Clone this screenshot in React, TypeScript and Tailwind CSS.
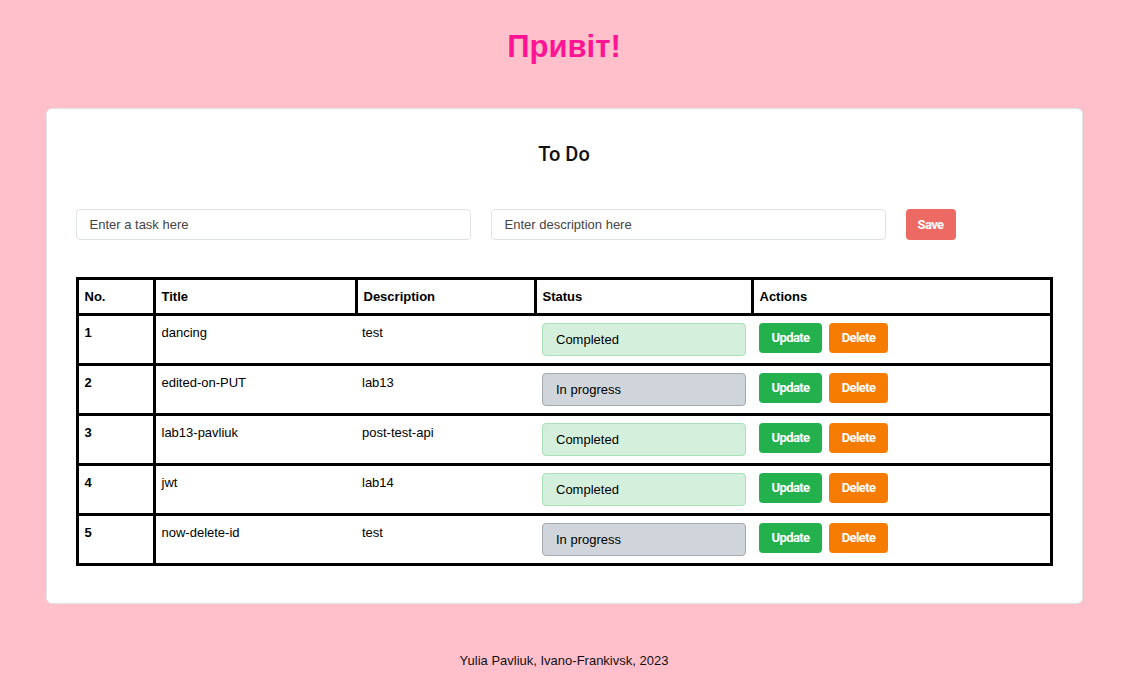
import React, { useState } from 'react';

interface Task {
  id: number;
  title: string;
  description: string;
  completed: boolean;
}

const initialTasks: Task[] = [
  { id: 1, title: 'dancing', description: 'test', completed: true },
  { id: 2, title: 'edited-on-PUT', description: 'lab13', completed: false },
  { id: 3, title: 'lab13-pavliuk', description: 'post-test-api', completed: true },
  { id: 4, title: 'jwt', description: 'lab14', completed: true },
  { id: 5, title: 'now-delete-id', description: 'test', completed: false },
];

const App = () => {
  const [tasks, setTasks] = useState<Task[]>(initialTasks);
  const [title, setTitle] = useState('');
  const [description, setDescription] = useState('');

  const handleSave = () => {
    if (!title.trim()) return;
    setTasks(prev => [...prev, { id: prev.length + 1, title, description, completed: false }]);
    setTitle('');
    setDescription('');
  };

  return (
    <div className="min-h-screen bg-[#ffc0cb] flex flex-col items-center font-['Liberation_Sans',Arial,sans-serif] text-black">
      <h1 className="mt-[29px] text-[31px] leading-[36px] font-bold text-[#ff1493]">Привіт!</h1>

      <div className="mt-[43px] w-[1037px] bg-white rounded-md border border-[#dfe3e6] px-[29px] pt-[31px] pb-[37px]">
        <h2 className="text-center text-[20px] leading-[28px] font-medium font-['Roboto',sans-serif] text-[#111]">To Do</h2>

        <div className="mt-[41px] flex items-center gap-5">
          <input
            value={title}
            onChange={e => setTitle(e.target.value)}
            placeholder="Enter a task here"
            className="w-[395px] h-[31px] rounded-[4px] border border-[#dee2e6] px-[13px] text-[13px] placeholder:text-[#444] outline-none"
          />
          <input
            value={description}
            onChange={e => setDescription(e.target.value)}
            placeholder="Enter description here"
            className="w-[395px] h-[31px] rounded-[4px] border border-[#dee2e6] px-[13px] text-[13px] placeholder:text-[#444] outline-none"
          />
          <button
            onClick={handleSave}
            className="w-[50px] h-[31px] rounded-[4px] bg-[#ec6964] text-white text-[13px] font-bold font-['Roboto',sans-serif] tracking-[-0.6px]"
          >
            Save
          </button>
        </div>

        <table className="mt-[37px] w-[974px] table-fixed border-collapse border-[3px] border-black text-[13px]">
          <colgroup>
            <col className="w-[77px]" />
            <col className="w-[202px]" />
            <col className="w-[179px]" />
            <col className="w-[217px]" />
            <col className="w-[299px]" />
          </colgroup>
          <thead>
            <tr className="h-[36px]">
              {['No.', 'Title', 'Description', 'Status', 'Actions'].map(h => (
                <th key={h} className="border-[3px] border-black text-left font-bold px-[6px] py-0">{h}</th>
              ))}
            </tr>
          </thead>
          <tbody>
            {tasks.map(task => (
              <tr key={task.id} className="h-[50px] border-[3px] border-black">
                <td className="align-top px-[6px] pt-[8px] font-bold border-[3px] border-black leading-[18px]">{task.id}</td>
                <td className="align-top px-[6px] pt-[8px] leading-[18px]">{task.title}</td>
                <td className="align-top px-[6px] pt-[8px] leading-[18px]">{task.description}</td>
                <td className="align-top pl-[7px] pr-[5px] pt-[7px]">
                  <div
                    className={`h-[33px] w-[204px] rounded-[4px] border flex items-center pl-[13px] text-[13px] ${task.completed ? 'bg-[#d4efdc] border-[#a8e0b8]' : 'bg-[#d0d5dc] border-[#a5a9ae]'}`}
                  >
                    {task.completed ? 'Completed' : 'In progress'}
                  </div>
                </td>
                <td className="align-top pl-[7px] pr-[5px] pt-[7px]">
                  <div className="flex gap-[7px]">
                    <button
                      onClick={() => setTasks(prev => prev.map(t => t.id === task.id ? { ...t, completed: !t.completed } : t))}
                      className="w-[63px] h-[30px] rounded-[4px] bg-[#22b14c] text-white text-[13px] font-bold font-['Roboto',sans-serif] tracking-[-0.6px]"
                    >
                      Update
                    </button>
                    <button
                      onClick={() => setTasks(prev => prev.filter(t => t.id !== task.id))}
                      className="w-[59px] h-[30px] rounded-[4px] bg-[#f57c00] text-white text-[13px] font-bold font-['Roboto',sans-serif] tracking-[-0.6px]"
                    >
                      Delete
                    </button>
                  </div>
                </td>
              </tr>
            ))}
          </tbody>
        </table>
      </div>

      <footer className="mt-[49px] text-[13px] leading-[15px] text-[#111]">Yulia Pavliuk, Ivano-Frankivsk, 2023</footer>
    </div>
  );
};

export default App;
